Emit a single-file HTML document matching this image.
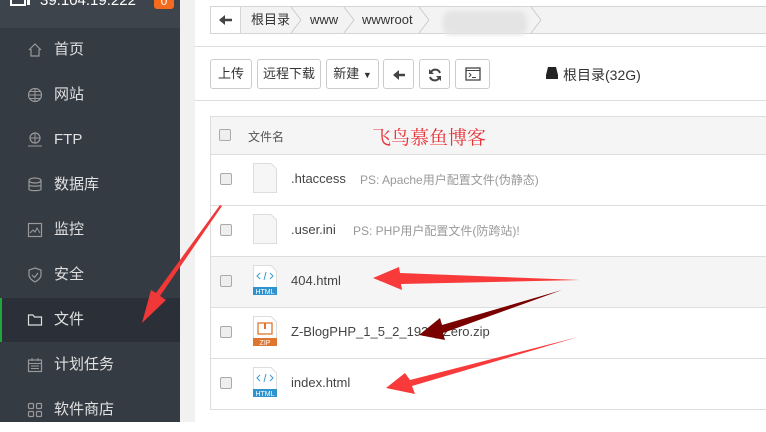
<!DOCTYPE html>
<html><head><meta charset="utf-8"><style>
*{margin:0;padding:0;box-sizing:border-box}
body{width:766px;height:422px;overflow:hidden;position:relative;background:#fff;font-family:"Liberation Sans","Noto Sans CJK SC",sans-serif}
.sb{position:absolute;left:0;top:0;width:180px;height:422px;background:#353b43}
.hd{position:absolute;left:0;top:0;width:180px;height:28px;background:#3e444c}
.ip{position:absolute;left:40px;top:-8px;color:#fff;font-size:15px}
.badge{position:absolute;left:154px;top:-6px;width:20px;height:15px;background:#f56a1d;border-radius:3px;color:#fff;font-size:12px;text-align:center;line-height:14px}
.mi{position:absolute;left:0;width:180px;height:44px;color:#e0e0e0;font-size:15px;line-height:44px;padding-left:54px}
.mi svg{position:absolute;left:27px;top:14px}
.act{background:#2b3038;border-left:2px solid #20a53a}
.gap{position:absolute;left:180px;top:0;width:15px;height:422px;background:#f1f1f1}
.bc{position:absolute;left:210px;top:6px;width:560px;height:28px;background:#f3f3f3;border:1px solid #d5d5d5}
.bc span{position:absolute;top:0;line-height:26px;font-size:13px;color:#333}
.hl{position:absolute;left:195px;width:571px;height:1px;background:#ddd}
.btn{position:absolute;top:59px;height:30px;border:1px solid #ccc;border-radius:3px;background:#fff;font-size:13px;color:#333;text-align:center;line-height:28px}
.th{position:absolute;left:210px;top:116px;width:560px;height:39px;background:#f5f5f5;border:1px solid #ddd}
.cb{position:absolute;width:12px;height:12px;border:1px solid #aaa;border-radius:2px;background:#eee}
.row{position:absolute;left:210px;width:560px;height:51px;border-left:1px solid #ddd;border-bottom:1px solid #ddd}
.row .n{position:absolute;left:80px;top:16px;font-size:13px;color:#444}
.row .ps{position:absolute;top:16px;font-size:12px;color:#999}
.fi{position:absolute;left:42px;top:8px;width:24px;height:30px}
</style></head><body>
<div class="sb"></div>
<div class="hd"><div class="ip">39.104.19.222</div><div class="badge">0</div>
<svg style="position:absolute;left:10px;top:-4px" width="22" height="12"><rect x="1" y="0" width="14" height="9" fill="none" stroke="#fff" stroke-width="2"/><rect x="17" y="0" width="3" height="9" fill="#fff"/></svg></div>
<div class="mi" style="top:28px">首页<svg width="16" height="16"><path d="M2 8L8 2L14 8M4 7V14H12V7" fill="none" stroke="#999" stroke-width="1.2"/></svg></div>
<div class="mi" style="top:73px">网站<svg width="16" height="16"><circle cx="8" cy="8" r="6.5" fill="none" stroke="#999" stroke-width="1.2"/><path d="M1.5 8H14.5M8 1.5V14.5M3 4.5H13M3 11.5H13" stroke="#999"/></svg></div>
<div class="mi" style="top:118px">FTP<svg width="16" height="16"><circle cx="8" cy="6" r="5" fill="none" stroke="#999" stroke-width="1.2"/><path d="M3 6H13M8 1V11M1 14H15" stroke="#999"/></svg></div>
<div class="mi" style="top:163px">数据库<svg width="16" height="16"><ellipse cx="8" cy="3.5" rx="6" ry="2.5" fill="none" stroke="#999" stroke-width="1.2"/><path d="M2 3.5V12.5C2 14 14 14 14 12.5V3.5M2 8C2 9.5 14 9.5 14 8" fill="none" stroke="#999" stroke-width="1.2"/></svg></div>
<div class="mi" style="top:208px">监控<svg width="16" height="16"><rect x="1.5" y="1.5" width="13" height="13" fill="none" stroke="#999" stroke-width="1.2"/><path d="M3 11L6 8L8 10L10 6L13 11" fill="none" stroke="#999"/></svg></div>
<div class="mi" style="top:253px">安全<svg width="16" height="16"><path d="M8 1L14 3V8C14 12 8 15 8 15C8 15 2 12 2 8V3Z" fill="none" stroke="#999" stroke-width="1.2"/><path d="M5 8L7.5 10.5L11 6" fill="none" stroke="#999" stroke-width="1.2"/></svg></div>
<div class="mi act" style="top:298px;padding-left:52px">文件<svg width="16" height="16" style="left:25px"><path d="M1.5 3H6L7.5 5H14.5V13H1.5Z" fill="none" stroke="#ddd" stroke-width="1.2"/></svg></div>
<div class="mi" style="top:343px">计划任务<svg width="16" height="16"><rect x="1.5" y="3" width="13" height="11.5" fill="none" stroke="#999" stroke-width="1.2"/><path d="M5 1V4M11 1V4M1.5 6.5H14.5M4 9H12M4 11.5H12" stroke="#999"/></svg></div>
<div class="mi" style="top:388px">软件商店<svg width="16" height="16"><rect x="1.5" y="1.5" width="5" height="5" rx="1" fill="none" stroke="#999" stroke-width="1.2"/><rect x="9.5" y="1.5" width="5" height="5" rx="1" fill="none" stroke="#999" stroke-width="1.2"/><rect x="1.5" y="9.5" width="5" height="5" rx="1" fill="none" stroke="#999" stroke-width="1.2"/><rect x="9.5" y="9.5" width="5" height="5" rx="1" fill="none" stroke="#999" stroke-width="1.2"/></svg></div>
<div class="gap"></div>

<div class="bc">
<div style="position:absolute;left:0;top:0;width:30px;height:26px;background:#fff;border-right:1px solid #d5d5d5"><svg width="30" height="26"><path d="M9 13H21" stroke="#444" stroke-width="2.5"/><path d="M8 13L14 8V18Z" fill="#444"/></svg></div>
<svg style="position:absolute;left:0;top:0" width="360" height="26"><path d="M80 0L90 13L80 26M133 0L143 13L133 26M208 0L218 13L208 26M320 0L330 13L320 26" fill="none" stroke="#ccc"/></svg>
<span style="left:40px">根目录</span><span style="left:99px">www</span><span style="left:151px">wwwroot</span>
<div style="position:absolute;left:232px;top:4px;width:84px;height:24px;background:#e4e4e4;border-radius:8px;filter:blur(2px)"></div>
</div>
<div class="hl" style="top:46px"></div>
<div class="btn" style="left:210px;width:42px">上传</div>
<div class="btn" style="left:257px;width:64px">远程下载</div>
<div class="btn" style="left:326px;width:53px">新建 <span style="font-size:9px">&#9660;</span></div>
<div class="btn" style="left:383px;width:31px"><svg width="16" height="14" style="margin-top:8px"><path d="M4 7H14" stroke="#444" stroke-width="2.5"/><path d="M2 7L8 2V12Z" fill="#444"/></svg></div>
<div class="btn" style="left:419px;width:31px"><svg width="14" height="14" style="margin-top:8px"><path d="M12 5A5 5 0 0 0 3 4M2 9A5 5 0 0 0 11 10" fill="none" stroke="#444" stroke-width="2"/><path d="M1 1V6H6Z M13 13V8H8Z" fill="#444"/></svg></div>
<div class="btn" style="left:455px;width:35px"><svg width="16" height="14" style="margin-top:7px"><rect x="1" y="1" width="14" height="12" fill="none" stroke="#444" stroke-width="1.3"/><path d="M1 3.5H15M4 6L6 8L4 10M7 10.5H11" fill="none" stroke="#444"/></svg></div>
<svg style="position:absolute;left:545px;top:66px" width="14" height="14"><path d="M3 1H11L13 9H1Z" fill="#222"/><rect x="1" y="9" width="12" height="4" fill="#222"/></svg>
<div style="position:absolute;left:563px;top:65px;font-size:14px;color:#333">根目录(32G)</div>
<div class="hl" style="top:100px"></div>

<div class="th"><div class="cb" style="left:8px;top:12px"></div><div style="position:absolute;left:37px;top:11px;font-size:12px;color:#555">文件名</div>
<div style="position:absolute;left:161px;top:6px;font-size:19px;color:#e8333a;font-family:'Noto Serif CJK SC',serif">飞鸟慕鱼博客</div></div>

<div class="row" style="top:155px"><div class="cb" style="left:9px;top:18px"></div>
<svg class="fi" viewBox="0 0 24 30"><path d="M0.5 0.5H18L23.5 6V29.5H0.5Z" fill="#f6f6f6" stroke="#ddd"/></svg>
<div class="n">.htaccess</div><div class="ps" style="left:149px">PS: Apache用户配置文件(伪静态)</div></div>
<div class="row" style="top:206px"><div class="cb" style="left:9px;top:18px"></div>
<svg class="fi" viewBox="0 0 24 30"><path d="M0.5 0.5H18L23.5 6V29.5H0.5Z" fill="#f6f6f6" stroke="#ddd"/></svg>
<div class="n">.user.ini</div><div class="ps" style="left:142px">PS: PHP用户配置文件(防跨站)!</div></div>
<div class="row" style="top:257px;background:#f5f5f5"><div class="cb" style="left:9px;top:18px"></div>
<svg class="fi" viewBox="0 0 24 30"><path d="M0.5 0.5H18L23.5 6V29.5H0.5Z" fill="#fff" stroke="#ddd"/><path d="M7 8L4 11L7 14M17 8L20 11L17 14M13 7L11 15" fill="none" stroke="#3a9bd5"/><rect x="0" y="22" width="24" height="8" fill="#2f93cf"/><text x="12" y="29" font-size="7" fill="#fff" text-anchor="middle" font-family="Liberation Sans">HTML</text></svg>
<div class="n">404.html</div></div>
<div class="row" style="top:308px"><div class="cb" style="left:9px;top:18px"></div>
<svg class="fi" viewBox="0 0 24 30"><path d="M0.5 0.5H18L23.5 6V29.5H0.5Z" fill="#fff" stroke="#ddd"/><rect x="5" y="7" width="14" height="11" fill="none" stroke="#e07530" stroke-width="1.3"/><rect x="11" y="7" width="2" height="6" fill="#e07530"/><rect x="0" y="22" width="24" height="8" fill="#e07530"/><text x="12" y="29" font-size="7" fill="#fff" text-anchor="middle" font-family="Liberation Sans">ZIP</text></svg>
<div class="n">Z-BlogPHP_1_5_2_1935_Zero.zip</div></div>
<div class="row" style="top:359px"><div class="cb" style="left:9px;top:18px"></div>
<svg class="fi" viewBox="0 0 24 30"><path d="M0.5 0.5H18L23.5 6V29.5H0.5Z" fill="#fff" stroke="#ddd"/><path d="M7 8L4 11L7 14M17 8L20 11L17 14M13 7L11 15" fill="none" stroke="#3a9bd5"/><rect x="0" y="22" width="24" height="8" fill="#2f93cf"/><text x="12" y="29" font-size="7" fill="#fff" text-anchor="middle" font-family="Liberation Sans">HTML</text></svg>
<div class="n">index.html</div></div>

<svg style="position:absolute;left:0;top:0" width="766" height="422">
<path d="M222 206L160 296L166 300L142 323L151 290L156 293L220 205Z" fill="#f03838"/>
<path d="M580 280L400 273L399 267L373 278L402 290L401 284Z" fill="#f83a3a"/>
<path d="M562 290L442 325L440 318L419 335L445 340L443 333Z" fill="#7a0000"/>
<path d="M578 337L410 380L405 373L386 388L415 394L412 386Z" fill="#f83a3a"/>
</svg>
</body></html>
